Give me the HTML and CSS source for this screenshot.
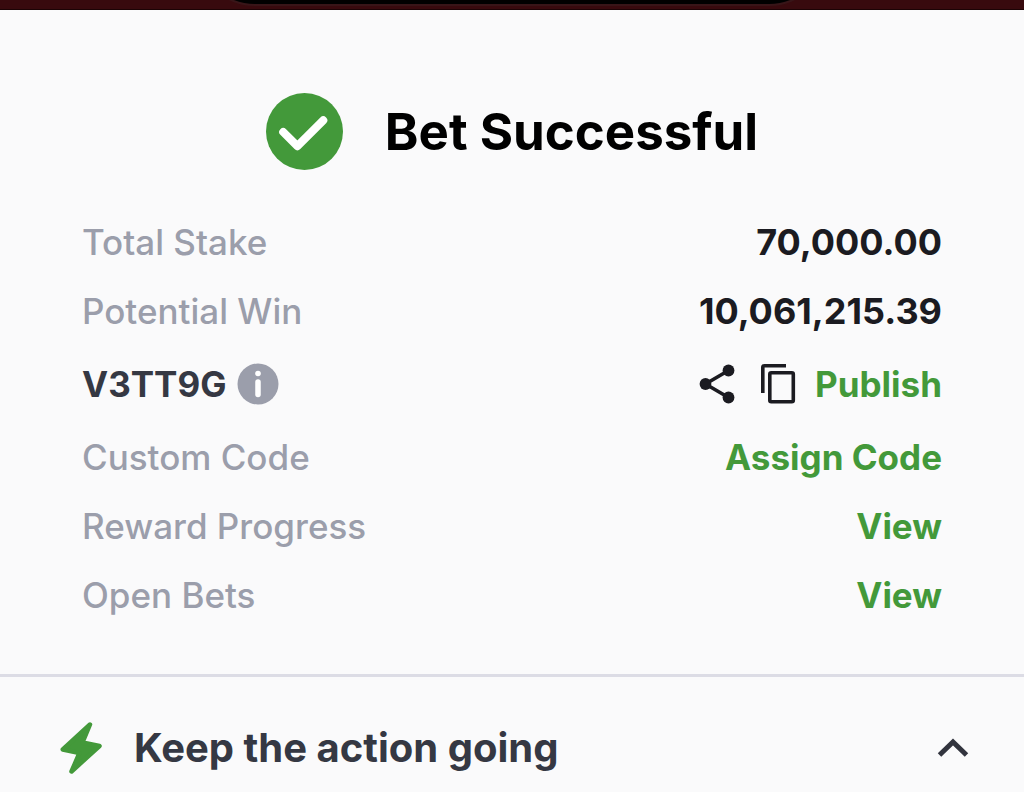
FILE: index.html
```html
<!DOCTYPE html>
<html lang="en">
<head>
    <meta charset="UTF-8">
    <meta name="viewport" content="width=device-width, initial-scale=1.0">
    <title>Bet Successful</title>
    <link rel="stylesheet" href="styles.css">
</head>
<body>
    <div class="topbar">
        <div class="notch"></div>
    </div>
    <main class="result">
        <header class="title">
            <svg class="check" viewBox="0 0 76 76" aria-hidden="true">
                <circle cx="38" cy="38" r="38" fill="#43993a"/>
                <path d="M17 38.500L31 52.500L56.500 27" fill="none" stroke="#fff" stroke-width="8" stroke-linecap="round" stroke-linejoin="round"/>
            </svg>
            <h1>Bet Successful</h1>
        </header>
        <dl class="details">
            <div class="row">
                <dt>Total Stake</dt>
                <dd>70,000.00</dd>
            </div>
            <div class="row">
                <dt>Potential Win</dt>
                <dd>10,061,215.39</dd>
            </div>
            <div class="row row-code">
                <dt class="code">
                    V3TT9G
                    <button type="button" class="info" aria-label="Code info">
                        <svg viewBox="0 0 42 42">
                            <circle cx="21" cy="21" r="20.500" fill="#9b9eab"/>
                            <circle cx="21" cy="10.500" r="2.800" fill="#fff"/>
                            <path d="M21 19V31.500" stroke="#fff" stroke-width="5.500" stroke-linecap="round"/>
                        </svg>
                    </button>
                </dt>
                <dd class="actions">
                    <button type="button" class="share" aria-label="Share">
                        <svg viewBox="0 0 36 40">
                            <path d="M29.500 6.500L6.500 20L29.500 33.500" fill="none" stroke="#1b1b21" stroke-width="3.600"/>
                            <g fill="#1b1b21">
                                <circle cx="29.500" cy="6.500" r="5.900"/>
                                <circle cx="6.500" cy="20" r="5.900"/>
                                <circle cx="29.500" cy="33.500" r="5.900"/>
                            </g>
                        </svg>
                    </button>
                    <button type="button" class="copy" aria-label="Copy code">
                        <svg viewBox="0 0 36 40" fill="none" stroke="#1b1b21" stroke-width="3.600">
                            <path d="M2.800 29V3.500Q2.800 1.800 4.500 1.800H26"/>
                            <rect x="9.800" y="8.800" width="23.500" height="29" rx="1.500"/>
                        </svg>
                    </button>
                    <button type="button" class="link">Publish</button>
                </dd>
            </div>
            <div class="row">
                <dt>Custom Code</dt>
                <dd><button type="button" class="link">Assign Code</button></dd>
            </div>
            <div class="row">
                <dt>Reward Progress</dt>
                <dd><a href="#reward" class="link">View</a></dd>
            </div>
            <div class="row">
                <dt>Open Bets</dt>
                <dd><a href="#bets" class="link">View</a></dd>
            </div>
        </dl>
    </main>
    <section class="more">
        <h2>
            <button type="button" class="toggle" aria-expanded="true">
                <svg class="bolt" viewBox="0 0 42 52" aria-hidden="true">
                    <path d="M30 2.500L2.800 27.500L19.500 31L11.500 49.500L39.500 24L22.500 20.500Z" fill="#43993a" stroke="#43993a" stroke-width="4.500" stroke-linejoin="round"/>
                </svg>
                <span>Keep the action going</span>
                <svg class="arrow" viewBox="0 0 32 20" aria-hidden="true">
                    <path d="M2.500 17L16 4L29.500 17" fill="none" stroke="#32343e" stroke-width="5"/>
                </svg>
            </button>
        </h2>
    </section>
</body>
</html>
```
FILE: styles.css
```css
*{
    margin: 0;
    padding: 0;
    box-sizing: border-box;
}
body{
    background-color: #fafafb;
    font-family: Inter, "Liberation Sans", sans-serif;
    color: #1b1b21;
}
button{
    border: none;
    background: none;
    font: inherit;
    color: inherit;
    cursor: pointer;
}
svg{
    display: block;
    flex-shrink: 0;
}
.topbar{
    height: 10px;
    background-color: #380a0e;
    border-bottom: 1px solid #1c0305;
    overflow: hidden;
}
/* only the lower edge of the notch is visible */
.notch{
    width: 630px;
    height: 60px;
    margin: -56px auto 0;
    background-color: #000;
    border: 2px solid #381518;
    border-top: none;
    border-radius: 0 0 60px 60px;
    box-sizing: content-box;
}
.title{
    display: flex;
    justify-content: center;
    align-items: center;
    gap: 42px;
    padding: 83px 24px 37px;
}
.title h1{
    font-size: 51px;
    line-height: 77px;
    font-weight: 700;
    color: #000;
}
.check{
    width: 77px;
    height: 77px;
}
.details{
    padding: 0 82px 45px;
    font-size: 35px;
}
.row{
    display: flex;
    justify-content: space-between;
    align-items: center;
    height: 69px;
}
.row dt{
    color: #9b9eab;
    font-weight: 500;
}
.row dd{
    font-size: 36px;
    font-weight: 700;
}
.row-code{
    height: 77px;
}
.row .code{
    display: flex;
    align-items: center;
    gap: 11px;
    color: #353843;
    font-weight: 700;
}
.info svg{
    width: 42px;
    height: 42px;
}
.actions{
    display: flex;
    align-items: center;
}
.share svg,
.copy svg{
    width: 36px;
    height: 40px;
}
.copy{
    margin: 0 19px 0 25px;
}
.row .link{
    font-size: 35px;
    color: #43993a;
    text-decoration: none;
}
.more{
    border-top: 3px solid #dcdce5;
}
.more h2{
    font-size: 40px;
    line-height: 48px;
    font-weight: 700;
}
.toggle{
    display: flex;
    align-items: center;
    width: 100%;
    padding: 45px 55px 18px 60px;
    color: #353843;
    text-align: left;
}
.toggle span{
    flex: 1;
    margin-left: 32px;
}
.bolt{
    width: 42px;
    height: 52px;
}
.arrow{
    width: 32px;
    height: 20px;
}
```
